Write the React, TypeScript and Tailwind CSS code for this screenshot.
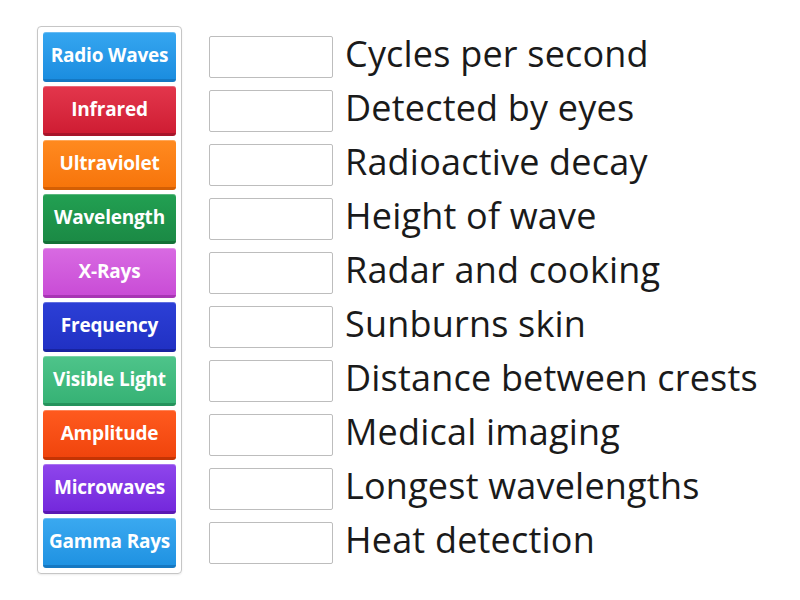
const cards = [
  { label: "Radio Waves", cls: "from-[#35a6f0] to-[#1b8de0] border-[#1478c4]" },
  { label: "Infrared", cls: "from-[#e3364c] to-[#cf1c33] border-[#a8142a]" },
  { label: "Ultraviolet", cls: "from-[#ff8a1f] to-[#f7750a] border-[#d45f04]" },
  { label: "Wavelength", cls: "from-[#22a052] to-[#1b8a45] border-[#137036]" },
  { label: "X-Rays", cls: "from-[#d86ae2] to-[#c94cd6] border-[#a835b4]" },
  { label: "Frequency", cls: "from-[#2c3fd6] to-[#2131c4] border-[#1823a0]" },
  { label: "Visible Light", cls: "from-[#4ec48a] to-[#36b275] border-[#25935c]" },
  { label: "Amplitude", cls: "from-[#ff5a1e] to-[#f0440c] border-[#c43404]" },
  { label: "Microwaves", cls: "from-[#8f45ec] to-[#7428dc] border-[#5a18b4]" },
  { label: "Gamma Rays", cls: "from-[#3aa9f0] to-[#1f92e2] border-[#1578c2]" },
];

const clues = [
  "Cycles per second",
  "Detected by eyes",
  "Radioactive decay",
  "Height of wave",
  "Radar and cooking",
  "Sunburns skin",
  "Distance between crests",
  "Medical imaging",
  "Longest wavelengths",
  "Heat detection",
];

export default function App() {
  return (
    <div className="min-h-[600px] bg-white font-['Open_Sans',sans-serif] flex items-start pl-[37px] pt-[26px]">
      <div className="flex flex-col gap-1 p-[5px] border border-[#c6c6c6] rounded-[4px] shadow-[0_1px_2px_rgba(0,0,0,0.08)]">
        {cards.map((c) => (
          <div
            key={c.label}
            className={`w-[133px] h-[50px] rounded-[3px] bg-linear-to-b border-b-[3px] flex items-center justify-center text-white font-bold text-[19px] tracking-[-0.2px] whitespace-nowrap shadow-[inset_0_1px_0_rgba(255,255,255,0.25)] ${c.cls}`}
          >
            {c.label}
          </div>
        ))}
      </div>

      <div className="ml-[27px] mt-[6px] flex flex-col gap-1">
        {clues.map((t) => (
          <div key={t} className="h-[50px] flex items-center gap-3">
            <div className="w-[124px] h-[42px] border border-[#bdbdbd] rounded-[2px] bg-white" />
            <span className="text-[36px] text-[#1a1a1a] tracking-[0.2px] leading-none -mt-[6px] whitespace-nowrap">{t}</span>
          </div>
        ))}
      </div>
    </div>
  );
}
